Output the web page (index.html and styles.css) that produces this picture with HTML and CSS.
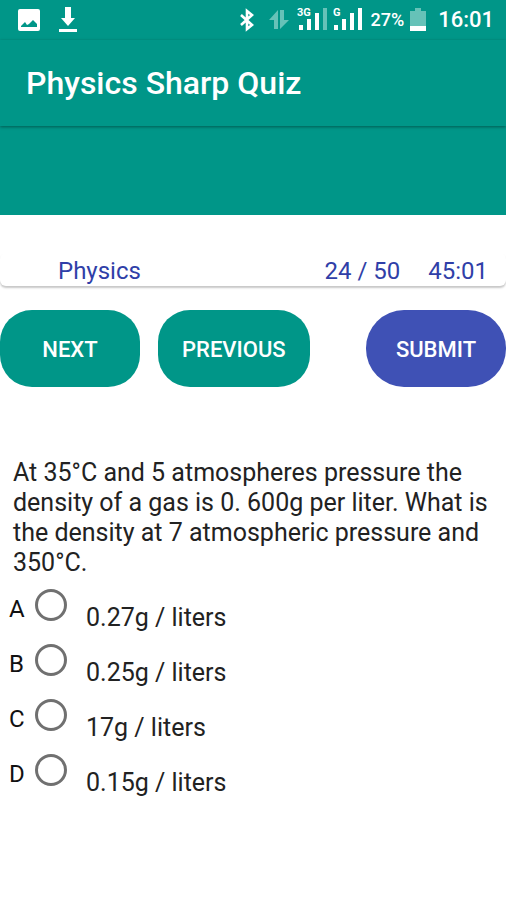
FILE: index.html
```html
<!DOCTYPE html>
<html lang="en">
<head>
<meta charset="utf-8">
<meta name="viewport" content="width=device-width, initial-scale=1">
<title>Physics Sharp Quiz</title>
<link rel="stylesheet" href="styles.css">
</head>
<body>
<div class="status">
  <div class="status-group notifications">
    <svg width="22" height="22" viewBox="0 0 22 22" aria-hidden="true"><path fill="#fff" fill-rule="evenodd" d="M2 0h18q2 0 2 2v18q0 2-2 2H2q-2 0-2-2V2Q0 0 2 0zM3 18h16v-3l-4-4-4 4-2 1-2-3-4 4z"/></svg>
    <svg width="20" height="26" viewBox="0 0 20 26" aria-hidden="true"><path fill="#fff" d="M7 0h6v11h4l-7 8-7-8h4zM1 22h18v3H1z"/></svg>
  </div>
  <div class="status-group system">
    <svg width="16" height="24" viewBox="0 0 16 24" aria-hidden="true"><path fill="none" stroke="#fff" stroke-width="2.6" d="M2 7l11 10-5 4V3l5 4L2 17"/></svg>
    <svg class="data" width="20" height="20" viewBox="0 0 20 20" aria-hidden="true"><path fill="#66c2b8" d="M9 0v19H5V10H0zM11 0h4v10h5l-9 9z"/></svg>
    <svg class="signal signal-first" width="32" height="26" viewBox="0 0 32 26" aria-hidden="true"><text class="network" x="0" y="9">3G</text><path fill="#fff" d="M2 18h4v5H2zM10 12h4v11h-4zM18 6h4v17h-4z"/><path fill="#66c2b8" d="M26 1h4v22h-4z"/></svg>
    <svg class="signal" width="32" height="26" viewBox="0 0 32 26" aria-hidden="true"><text class="network" x="0" y="9">G</text><path fill="#fff" d="M1 18h4v5H1zM9 12h4v11H9zM17 6h4v17h-4zM25 1h4v22h-4z"/></svg>
    <span class="percent">27%</span>
    <svg class="battery" width="16" height="24" viewBox="0 0 16 24" aria-hidden="true"><path fill="#66c2b8" d="M5 0h6v3h5v15H0V3h5z"/><path fill="#fff" d="M0 18h16v5H0z"/></svg>
    <time class="clock">16:01</time>
  </div>
</div>
<header class="appbar"><h1>Physics Sharp Quiz</h1></header>
<div class="band"></div>
<main>
  <section class="info">
    <span class="subject">Physics</span>
    <span class="progress">24 / 50</span>
    <span class="timer">45:01</span>
  </section>
  <div class="actions">
    <button class="btn" type="button">NEXT</button>
    <button class="btn previous" type="button">PREVIOUS</button>
    <button class="btn submit" type="submit">SUBMIT</button>
  </div>
  <fieldset class="question">
    <legend>At 35°C and 5 atmospheres pressure the density of a gas is 0. 600g per liter. What is the density at 7 atmospheric pressure and 350°C.</legend>
    <label class="option"><span class="letter">A</span><input type="radio" name="answer"><span class="answer">0.27g / liters</span></label>
    <label class="option"><span class="letter">B</span><input type="radio" name="answer"><span class="answer">0.25g / liters</span></label>
    <label class="option"><span class="letter">C</span><input type="radio" name="answer"><span class="answer">17g / liters</span></label>
    <label class="option"><span class="letter">D</span><input type="radio" name="answer"><span class="answer">0.15g / liters</span></label>
  </fieldset>
</main>
</body>
</html>
```
FILE: styles.css
```css
* { box-sizing: border-box; }

body {
  margin: 0;
  background: #fff;
  color: #222;
  font-family: Roboto, sans-serif;
  font-size: 25px;
  line-height: 30px;
}

svg { display: block; flex: none; }

.status {
  display: flex;
  justify-content: space-between;
  height: 40px;
  padding: 0 12px 0 18px;
  background: #009688;
  color: #fff;
}

.status-group { display: flex; align-items: center; }
.notifications { gap: 18px; }
.data { margin-left: 14px; }
.signal { margin-left: 4px; }
.signal-first { margin-left: 8px; }
.network { fill: #fff; font-size: 11px; font-weight: 700; }
.percent { margin-left: 5px; font-size: 18px; font-weight: 500; }
.battery { margin-left: 6px; }
.clock { margin-left: 12px; font-size: 22px; font-weight: 500; }

.appbar {
  position: relative;
  display: flex;
  align-items: center;
  height: 86px;
  padding: 0 26px;
  background: #009688;
  box-shadow: 0 1px 3px rgba(0, 0, 0, 0.4);
  color: #fff;
}

h1 { margin: 0; font-size: 32px; font-weight: 500; line-height: 40px; }

.band { height: 89px; background: #009688; }

.info {
  display: flex;
  align-items: flex-end;
  margin-top: 38px;
  padding: 3px 18px 0 58px;
  border-radius: 6px;
  box-shadow: 0 2px 2px rgba(0, 0, 0, 0.22);
  color: #303fa8;
  font-size: 24px;
}

.progress { margin-left: auto; }
.timer { margin-left: 28px; }

.actions { display: flex; padding-top: 24px; }

.btn {
  min-width: 140px;
  height: 77px;
  padding: 3px 24px 0;
  border: 0;
  border-radius: 32px;
  background: #009688;
  color: #fff;
  font: 500 22px/30px Roboto, sans-serif;
}

.previous { margin-left: 18px; }
.submit { margin-left: auto; border-radius: 38px; background: #3f51b5; }

.question { margin: 71px 0 0; padding: 0; border: 0; }

legend { margin-bottom: 7px; padding: 0 12px 0 13px; }

.option { display: flex; align-items: flex-start; height: 55px; padding-left: 9px; }

.letter { width: 26px; padding-top: 9px; color: #111; font-size: 24px; }

input {
  appearance: none;
  width: 32px;
  height: 32px;
  margin: 4px 0 0;
  border: 3px solid #707070;
  border-radius: 50%;
}

.answer { padding: 18px 0 0 19px; }
```
